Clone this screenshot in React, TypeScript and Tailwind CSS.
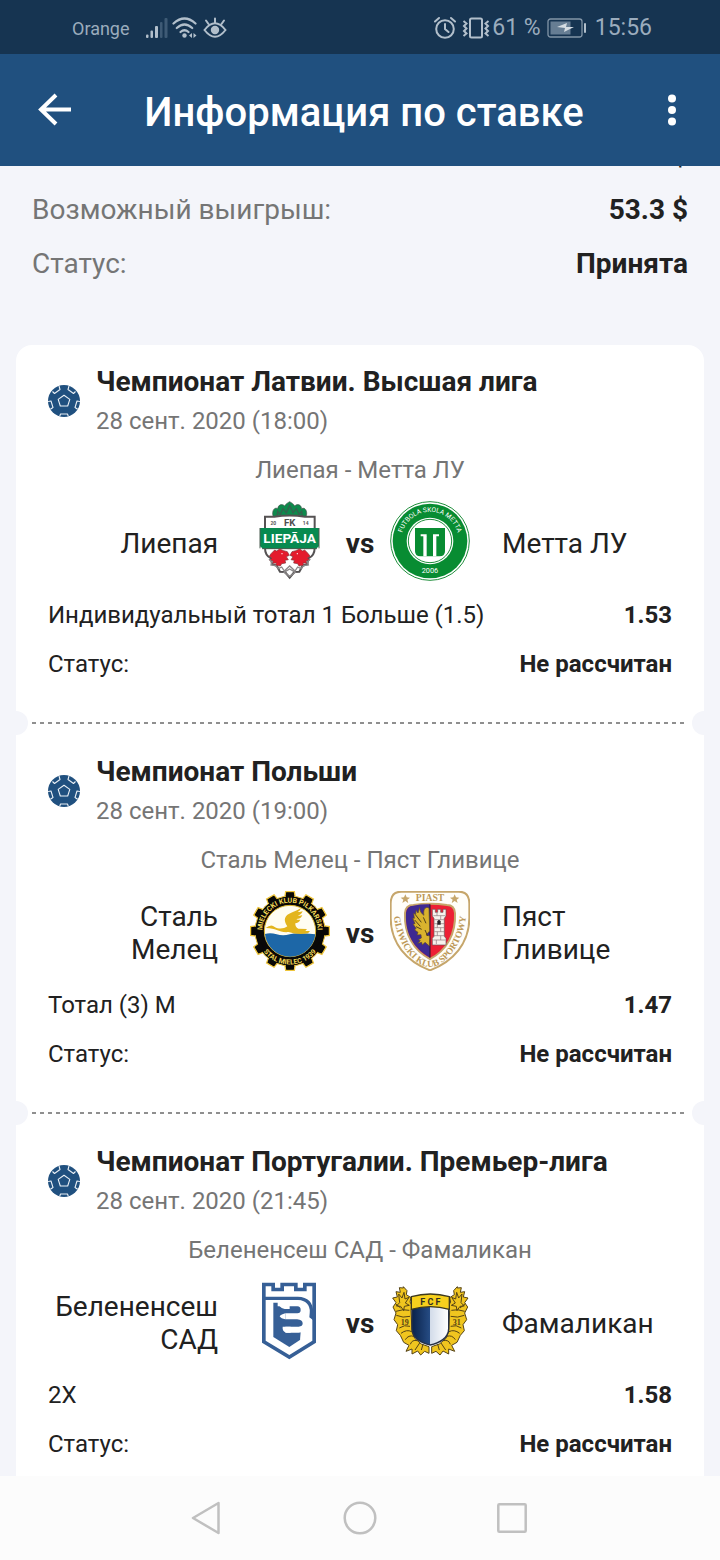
import type { ReactNode } from "react";

function SoccerBall() {
  return (
    <svg viewBox="0 0 32 32" className="size-8 shrink-0" aria-hidden="true">
      <defs>
        <clipPath id="ball">
          <circle cx="16" cy="16" r="16" />
        </clipPath>
      </defs>
      <circle cx="16" cy="16" r="16" fill="#20507f" />
      <g clipPath="url(#ball)" fill="none" stroke="#e9eff5" strokeWidth="1.1" strokeLinejoin="round">
        <path d="M16 10.2l5.800 4.200-2.100 6.600h-7.400l-2.100-6.600z" />
        <path d="M4.500 6.500l2 2 5.500-4-1-3.500" />
        <path d="M27.500 6.500l-2 2-5.500-4 1-3.500" />
        <path d="M0 16.500l3-.5 2 6.500-3 2" />
        <path d="M32 16.500l-3-.5-2 6.500 3 2" />
        <path d="M11.500 32l1-3h7l1 3" />
      </g>
    </svg>
  );
}

function LiepajaCrest() {
  return (
    <svg viewBox="30 33 240 240" className="size-20" role="img" aria-label="Лиепая">
      <path
        d="M100 81c-6-16 2-31 13-25 2-12 12-16 21-8 3-6 8-9 15-13 7 4 12 7 15 13 9-8 19-4 21 8 11-6 19 9 13 25z"
        fill="#0d8a4c"
        stroke="#47514c"
        strokeWidth="2"
      />
      <path d="M111 78l2-14 8 9 8-17 10 12 10-22 10 22 10-12 8 17 8-9 2 14" fill="none" stroke="#35614e" strokeWidth="4" />
      <path
        d="M75 80h28q46-7 92 0h29v94c0 17-7 26-19 31l-3 18-14 4-10 18-15 1-14 17-14-17-15-1-10-18-14-4-3-18c-11-5-18-14-18-31z"
        fill="#fff"
        stroke="#555253"
        strokeWidth="6"
      />
      <path d="M60 114h177v55l-10 8H70l-10-8z" fill="#068a50" />
      <path d="M60 114v61M237 114v61M66 176h165" stroke="#4a5c50" strokeWidth="3" />
      <text x="149" y="108" textAnchor="middle" fontSize="29" fontWeight="700" fill="#514f50" fontFamily="Roboto, sans-serif">FK</text>
      <text x="100" y="106" textAnchor="middle" fontSize="15" fontWeight="700" fill="#555" fontFamily="Roboto, sans-serif">20</text>
      <text x="197" y="106" textAnchor="middle" fontSize="15" fontWeight="700" fill="#555" fontFamily="Roboto, sans-serif">14</text>
      <text x="149" y="160" textAnchor="middle" fontSize="41" fontWeight="700" fill="#fff" fontFamily="Roboto, sans-serif">LIEPĀJA</text>
      <g fill="#e41b2d" stroke="#81343a" strokeWidth="2">
        <path d="M93 191l11-11 6 3 9-6 12 5 11 3 6 11-9 4 6 9-10 2 2 8-12 2-4 7-14-2 2-7-12 1 3-7-12-3 8-6-8-5z" />
        <path d="M205 191l-11-11-6 3-9-6-12 5-11 3-6 11 9 4-6 9 10 2-2 8 12 2 4 7 14-2-2-7 12 1-3-7 12-3-8-6 8-5z" />
      </g>
      <path
        d="M87 207l9 9-3 9 14 2 8 9 10-5 8 12 16-15 16 15 8-12 10 5 8-9 14-2-3-9 9-9M132 247l17-10 17 10-17 12z"
        fill="none"
        stroke="#8a8788"
        strokeWidth="4"
      />
      <circle cx="126" cy="191" r="2" fill="#fff" />
      <circle cx="172" cy="191" r="2" fill="#fff" />
    </svg>
  );
}

function MettaCrest() {
  return (
    <svg viewBox="450 33 240 240" className="size-20" role="img" aria-label="Метта ЛУ">
      <circle cx="570" cy="153" r="118" fill="#fff" stroke="#218f3d" strokeWidth="3" />
      <circle cx="570" cy="153" r="112" fill="#088c32" />
      <circle cx="570" cy="153" r="70" fill="#fff" />
      <circle cx="570" cy="153" r="65" fill="none" stroke="#218f3d" strokeWidth="3" />
      <path d="M525 114h90v69q0 16-16 16h-58q-16 0-16-16z" fill="#088c32" />
      <path d="M555 199v-61M584 199v-61" fill="none" stroke="#fff" strokeWidth="10" />
      <path d="M542 136h18M579 136h18" fill="none" stroke="#fff" strokeWidth="6" />
      <path id="metta-arc" d="M487 129a86 86 0 0 1 166 0" fill="none" />
      <text fontSize="20" fill="#fff" fontFamily="Roboto, sans-serif">
        <textPath href="#metta-arc" startOffset="50%" textAnchor="middle">FUTBOLA SKOLA METTA</textPath>
      </text>
      <text x="570" y="250" textAnchor="middle" fontSize="22" fill="#fff" fontFamily="Roboto, sans-serif">2006</text>
    </svg>
  );
}

const gearTeeth = [0, 30, 60, 90, 120, 150, 180, 210, 240, 270, 300, 330];

function MielecCrest() {
  return (
    <svg viewBox="30 33 240 240" className="size-20" role="img" aria-label="Сталь Мелец">
      {gearTeeth.map((angle) => (
        <path
          key={angle}
          d="M134 55l3-20h26l3 20z"
          transform={`rotate(${angle} 150 153)`}
          fill="#090806"
          stroke="#efc63d"
          strokeWidth="4"
        />
      ))}
      <circle cx="150" cy="153" r="105" fill="#090806" stroke="#efc63d" strokeWidth="3" />
      {gearTeeth.map((angle) => (
        <path key={angle} d="M136 60l3-22h22l3 22z" transform={`rotate(${angle} 150 153)`} fill="#090806" />
      ))}
      <circle cx="150" cy="153" r="77" fill="#fffdf2" stroke="#d9b32e" strokeWidth="3" />
      <path d="M75 162q16-5 35 1t39 0 77 0a76 76 0 0 1-151 0z" fill="#1d67a7" />
      <path
        d="M77 144q17-14 27-3c12 7 27 6 38-2-6-8-9-17-7-24 7-18 27-17 48-31-2 6-5 10-10 12 6 0 12-1 15-4-2 9-8 13-15 14 5 2 10 1 14-1-3 9-10 12-18 12 4 3 8 3 12 2-4 8-10 10-15 11-1 8 3 13 9 16l26 1-5 6h14l-6 7c-24 4-41 1-58-4-29 3-39-13-69-12z"
        fill="#e3b51d"
      />
      <path id="mielec-top" d="M67 151a83 83 0 0 1 166 0" fill="none" />
      <path id="mielec-bottom" d="M52 177a101 101 0 0 0 196 0" fill="none" />
      <g fill="#f3d957" fontSize="21" fontWeight="700" fontFamily="Roboto, sans-serif">
        <text>
          <textPath href="#mielec-top" startOffset="50%" textAnchor="middle">MIELECKI KLUB PIŁKARSKI</textPath>
        </text>
        <text>
          <textPath href="#mielec-bottom" startOffset="50%" textAnchor="middle">STAL MIELEC 1939</textPath>
        </text>
      </g>
    </svg>
  );
}

function PiastCrest() {
  return (
    <svg viewBox="450 33 240 240" className="size-20" role="img" aria-label="Пяст Гливице">
      <path
        d="M484 35h172q32 0 32 36v43c0 76-48 130-118 157-70-27-118-81-118-157V71q0-36 32-36z"
        fill="#fffefa"
        stroke="#c6a66b"
        strokeWidth="6"
      />
      <path
        d="M520 75q50-7 101 0 22 0 24 24c3 63-25 112-75 138-50-26-78-75-75-138q2-24 25-24z"
        fill="#ed2035"
        stroke="#c6a66b"
        strokeWidth="6"
      />
      <path d="M570 73q-26-1-50 4-20 1-22 22c-3 61 22 105 72 134z" fill="#3e2992" />
      <path d="M570 73v160" stroke="#27152c" strokeWidth="3" />
      <path
        d="M567 84c-14-7-18 10-15 22-8-5-13-13-13-24l-5 17-6-8-1 13-6-4 2 15-5-1 7 17-6 1 9 13-4 5 10 7-3 8 12-1 1 10-9 5 6 3-8 8 12-3 2 8 8-8 13 11 1-30-11-3 11-12z"
        fill="#d9b32e"
        stroke="#5d4927"
        strokeWidth="2"
      />
      <path d="M527 105l17 22M524 120l17 19M528 140l17 8M550 112l8 18M555 150l8 18" stroke="#51411b" strokeWidth="3" />
      <path
        d="M577 88h9v9h7v-9h9v9h7v-9h9v20l-5 7v54l5 6v20h-41v-20l5-6v-54l-5-7z"
        fill="#f7f2ed"
        stroke="#675155"
        strokeWidth="2"
      />
      <path d="M580 107h36M583 119h29M583 131h29M583 143h29M583 155h29M582 167h31M580 180h36M591 98v9M602 107v12M592 131v12M602 143v12M592 155v12M602 167v13M589 180v12" stroke="#8b777a" strokeWidth="2" />
      <path d="M592 134v-10q5-8 10 0v10z" fill="#29232a" />
      <path d="M496 43l4 9 10 1-8 6 3 10-9-6-9 6 3-10-8-6 10-1zM644 43l4 9 10 1-8 6 3 10-9-6-9 6 3-10-8-6 10-1z" fill="#c6a66b" />
      <path id="piast-baseline" d="M460 80C460 180 520 261 570 261S680 180 680 80" fill="none" />
      <g fill="#bc9857" fontFamily="Liberation Serif, serif" fontWeight="700">
        <text x="570" y="64" textAnchor="middle" fontSize="29">PIAST</text>
        <text fontSize="28">
          <textPath href="#piast-baseline" startOffset="50%" textAnchor="middle">GLIWICKI KLUB SPORTOWY</textPath>
        </text>
      </g>
    </svg>
  );
}

function BelenensesCrest() {
  return (
    <svg viewBox="30 33 240 240" className="size-20" role="img" aria-label="Белененсеш САД">
      <path d="M66 38h39v15h16V38h52v15h16V38h39v180l-80 50-82-50z" fill="#365f96" />
      <path d="M77 49h17v15h38V49h30v15h38V49h17v163l-69 43-71-43z" fill="#fff" />
      <path d="M72 85h101q42 1 42 44v14" fill="none" stroke="#365f96" strokeWidth="10" />
      <path d="M210 120h14v40q-6-13-16-18z" fill="#365f96" />
      <path d="M100 98h92v104l-44 29-48-30z" fill="#365f96" />
      <path
        d="M113 100h59q19 0 19 20 0 19-19 19h-36M172 139q25 2 25 21 0 19-21 19h-40"
        fill="none"
        stroke="#fff"
        strokeWidth="18"
      />
      <path d="M113 93q1 20 21 24h15v-20zM136 130q-15 4-17 9 4 7 17 9zM128 170q-2 15 12 18h12v-18zM182 186l12-8v28l-14 4z" fill="#fff" />
    </svg>
  );
}

function LaurelBranch() {
  return (
    <g stroke="#554315" strokeWidth="3" strokeLinejoin="round" fill="#f0c51f">
      <path d="M494 50l11 12-2 12 14 9-3 13 7 12-4 14 3 63 8 20 20 17 23 8v20l-13-6-12 11-9-12-17 9 0-15-18 7 9-18-16-9-10-21-12-14 4-18-11-15 6-20-9-18 9-13-10-14 14-3-4-16 13 2-3-14 12 1z" />
      <path d="M480 72l10 12 6-17 3 20 12-5-11 17 12 7-15 3-2 13-9-13-13-1 10-10zM470 101l16 13M472 124q22-8 40-3M473 136q20 9 41 3M482 174q15-11 32-5M487 190q17-13 32-5M500 209q9-15 26-10M515 223q5-15 21-11M529 240l14-21M548 240l5-17" fill="none" />
    </g>
  );
}

function FamalicaoCrest() {
  return (
    <svg viewBox="450 33 240 240" className="size-20" role="img" aria-label="Фамаликан">
      <defs>
        <linearGradient id="fama-blue" x1="0" x2="1">
          <stop stopColor="#0b244d" />
          <stop offset="1" stopColor="#264c84" />
        </linearGradient>
        <linearGradient id="fama-white" x1="0" x2="1">
          <stop stopColor="#d2dbe9" />
          <stop offset="1" stopColor="#fff" />
        </linearGradient>
      </defs>
      <g transform="translate(-4 0)">
        <LaurelBranch />
      </g>
      <g transform="translate(1146 0) scale(-1 1)">
        <LaurelBranch />
      </g>
      <path d="M514 111l57-8 57 8v65c0 28-27 45-57 51-30-6-57-23-57-51z" fill="#263044" />
      <path d="M518 113l52-5v115c-26-6-52-21-52-47z" fill="url(#fama-blue)" />
      <path d="M570 108l54 5v63c0 26-27 41-54 47z" fill="url(#fama-white)" />
      <path d="M514 80q57-16 114 0v38q-57-16-114 0z" fill="#f7d01d" stroke="#3d391e" strokeWidth="4" />
      <text x="571" y="106" textAnchor="middle" fontSize="27" fontWeight="700" fill="#302e23" fontFamily="Roboto, sans-serif">F C F</text>
      <text x="494" y="164" textAnchor="middle" fontSize="24" fontWeight="700" fill="#554315" fontFamily="Liberation Serif, serif">19</text>
      <text x="650" y="164" textAnchor="middle" fontSize="24" fontWeight="700" fill="#554315" fontFamily="Liberation Serif, serif">31</text>
    </svg>
  );
}

function StatusBar() {
  return (
    <div className="flex h-[54px] shrink-0 items-center justify-between bg-[#163451] pt-0.5 pr-[68px] pl-[72px] text-[#9bacbd]">
      <div className="flex items-center">
        <span className="text-[18px]">Orange</span>
        <svg viewBox="0 0 22 22" className="ml-4 h-[22px] w-[22px]" fill="#b2bfcb" aria-label="Сигнал" role="img">
          <rect x="0" y="17.500" width="2.500" height="3.500" rx="1" />
          <rect x="4.500" y="13.500" width="2.500" height="7.500" rx="1" />
          <rect x="9" y="9" width="3" height="12" rx="1" />
          <rect x="14" y="5" width="2.500" height="16" rx="1" fill="#3e5a75" />
          <rect x="18.500" y="1" width="3" height="20" rx="1" fill="#3e5a75" />
        </svg>
        <svg viewBox="0 0 25 22" className="ml-1 h-[22px] w-[25px]" aria-label="Wi-Fi" role="img">
          <g fill="none" stroke="#b2bfcb" strokeWidth="2.200" strokeLinecap="round">
            <path d="M1.500 6.500q11-10 22 0M4.800 11q7.700-7 15.400 0M8.500 15q4-3.500 8 0" />
          </g>
          <circle cx="12.500" cy="18.500" r="2.200" fill="#b2bfcb" />
          <path d="M20 16v5l-3-2.500zM21.500 16v5l3-2.500z" fill="#b2bfcb" />
        </svg>
        <svg viewBox="0 0 24 22" className="ml-1.5 h-[22px] w-6" fill="none" stroke="#b2bfcb" strokeWidth="2" strokeLinecap="round" aria-label="Защита зрения" role="img">
          <path d="M1.500 13Q12-.5 22.500 13 12 26.500 1.500 13zM12 5.500V1.500M5.500 7L3 3.500M18.500 7L21 3.500" />
          <circle cx="12" cy="13" r="3.200" fill="#b2bfcb" />
        </svg>
      </div>
      <div className="flex items-center">
        <svg viewBox="0 0 22 24" className="h-6 w-[22px]" fill="none" stroke="#b2bfcb" strokeWidth="2" strokeLinecap="round" aria-label="Будильник" role="img">
          <circle cx="11" cy="13" r="8.800" />
          <path d="M11 8v5l3.500 3M1 5.500L5 2M21 5.500L17 2" />
        </svg>
        <svg viewBox="0 0 28 24" className="ml-1.5 h-6 w-7" fill="none" stroke="#b2bfcb" strokeWidth="2" aria-label="Вибрация" role="img">
          <rect x="8" y="2.500" width="12" height="19" rx="1.500" />
          <path d="M1.500 5l3 2.500L2 10l2.500 2.500L2 15l2.500 2.500L1.500 20M26.500 5l-3 2.500L26 10l-2.500 2.500L26 15l-2.500 2.500 3 2.500" />
        </svg>
        <span className="ml-0.5 text-[23px]">61 %</span>
        <svg viewBox="0 0 40 20" className="ml-1.5 h-5 w-10" aria-label="Заряд батареи" role="img">
          <rect x="1" y="1" width="34" height="18" rx="2.500" fill="none" stroke="#8295a7" strokeWidth="1.300" />
          <rect x="3.500" y="3.500" width="20" height="13" fill="#667d93" />
          <path d="M10 9l10-4-1 4h8l-10 5 1-4z" fill="#d5dce2" />
          <rect x="37" y="5" width="2" height="10" rx="1" fill="#b2bfcb" />
        </svg>
        <span className="ml-2 text-[23px]">15:56</span>
      </div>
    </div>
  );
}

function Toolbar() {
  return (
    <header className="flex h-28 shrink-0 items-center justify-between bg-[#20507f] px-8 text-white">
      <button type="button" aria-label="Назад" className="flex h-12 w-14 items-center">
        <svg viewBox="0 0 48 48" className="size-12" fill="none" stroke="currentColor" strokeWidth="4">
          <path d="M24 9L9 23.500 24 38M9 23.500h30" />
        </svg>
      </button>
      <h1 className="pt-1.5 text-[40px] leading-12 font-medium">Информация по ставке</h1>
      <button type="button" aria-label="Меню" className="flex size-12 items-center justify-end">
        <svg viewBox="0 0 16 32" className="mr-2 h-8 w-4" fill="currentColor">
          <circle cx="8" cy="4.500" r="4" />
          <circle cx="8" cy="16" r="4" />
          <circle cx="8" cy="27.500" r="4" />
        </svg>
      </button>
    </header>
  );
}

function SummaryRow({ label, value }: { label?: string; value: string }) {
  return (
    <div className="flex h-[54px] items-center justify-between text-[28px]">
      <dt className="text-[#757575]">{label}</dt>
      <dd className="font-bold">{value}</dd>
    </div>
  );
}

function Divider() {
  return (
    <div className="flex h-6 items-center" role="separator">
      <span className="h-6 w-3 rounded-r-full bg-[#f4f5fa]" />
      <span className="mx-1 h-0.5 flex-1 bg-[repeating-linear-gradient(90deg,#8f8f8f_0_4px,transparent_4px_8px)]" />
      <span className="h-6 w-3 rounded-l-full bg-[#f4f5fa]" />
    </div>
  );
}

type Bet = {
  league: string;
  date: string;
  home: string;
  away: string;
  homeCrest: ReactNode;
  awayCrest: ReactNode;
  market: string;
  odds: string;
};

const bets: Bet[] = [
  {
    league: "Чемпионат Латвии. Высшая лига",
    date: "28 сент. 2020 (18:00)",
    home: "Лиепая",
    away: "Метта ЛУ",
    homeCrest: <LiepajaCrest />,
    awayCrest: <MettaCrest />,
    market: "Индивидуальный тотал 1 Больше (1.5)",
    odds: "1.53",
  },
  {
    league: "Чемпионат Польши",
    date: "28 сент. 2020 (19:00)",
    home: "Сталь Мелец",
    away: "Пяст Гливице",
    homeCrest: <MielecCrest />,
    awayCrest: <PiastCrest />,
    market: "Тотал (3) М",
    odds: "1.47",
  },
  {
    league: "Чемпионат Португалии. Премьер-лига",
    date: "28 сент. 2020 (21:45)",
    home: "Белененсеш САД",
    away: "Фамаликан",
    homeCrest: <BelenensesCrest />,
    awayCrest: <FamalicaoCrest />,
    market: "2X",
    odds: "1.58",
  },
];

function BetItem({ bet }: { bet: Bet }) {
  return (
    <article className="px-8 pt-[17px] pb-[23px]">
      <div className="flex items-center gap-4">
        <SoccerBall />
        <div>
          <h2 className="text-[28px] leading-[40px] font-bold">{bet.league}</h2>
          <p className="text-[24px] leading-[38px] text-[#757575]">{bet.date}</p>
        </div>
      </div>
      <p className="mt-2.5 text-center text-[24px] leading-[40px] text-[#757575]">
        {bet.home} - {bet.away}
      </p>
      <div className="mt-[11px] grid h-20 grid-cols-[1fr_80px_60px_80px_1fr] items-center text-[28px] leading-[33px]">
        <span className="pt-1 pr-8 pl-1 text-right">{bet.home}</span>
        {bet.homeCrest}
        <span className="pt-1 text-center font-bold">vs</span>
        {bet.awayCrest}
        <span className="pt-1 pl-8">{bet.away}</span>
      </div>
      <dl className="mt-[9px] text-[24px]">
        <div className="flex h-[49px] items-center justify-between">
          <dt>{bet.market}</dt>
          <dd className="font-bold">{bet.odds}</dd>
        </div>
        <div className="flex h-[49px] items-center justify-between">
          <dt>Статус:</dt>
          <dd className="font-bold">Не рассчитан</dd>
        </div>
      </dl>
    </article>
  );
}

function NavigationBar() {
  return (
    <nav className="flex h-[84px] shrink-0 items-center justify-center gap-[104px] bg-[#fcfcfc] text-[#c0c0c0]">
      <button type="button" aria-label="Назад" className="size-12">
        <svg viewBox="0 0 48 48" className="size-12" fill="none" stroke="currentColor" strokeWidth="2.500" strokeLinejoin="round">
          <path d="M9 24L34.500 9v30z" />
        </svg>
      </button>
      <button type="button" aria-label="Домой" className="size-12">
        <svg viewBox="0 0 48 48" className="size-12" fill="none" stroke="currentColor" strokeWidth="2.500">
          <circle cx="24" cy="24" r="15.300" />
        </svg>
      </button>
      <button type="button" aria-label="Недавние" className="size-12">
        <svg viewBox="0 0 48 48" className="size-12" fill="none" stroke="currentColor" strokeWidth="2.500">
          <rect x="10.300" y="10.300" width="27.400" height="27.400" rx="1" />
        </svg>
      </button>
    </nav>
  );
}

export default function App() {
  return (
    <div className="flex h-screen flex-col bg-[#f4f5fa] font-[Roboto,sans-serif] text-[#212121]">
      <StatusBar />
      <Toolbar />
      <main className="min-h-0 flex-1 overflow-hidden">
        <dl className="-mt-[37px] px-8">
          <SummaryRow value="$" />
          <SummaryRow label="Возможный выигрыш:" value="53.3 $" />
          <SummaryRow label="Статус:" value="Принята" />
        </dl>
        <section className="mx-4 mt-[54px] overflow-hidden rounded-2xl bg-white">
          {bets.map((bet, index) => (
            <div key={bet.league}>
              {index > 0 && <Divider />}
              <BetItem bet={bet} />
            </div>
          ))}
        </section>
      </main>
      <NavigationBar />
    </div>
  );
}
